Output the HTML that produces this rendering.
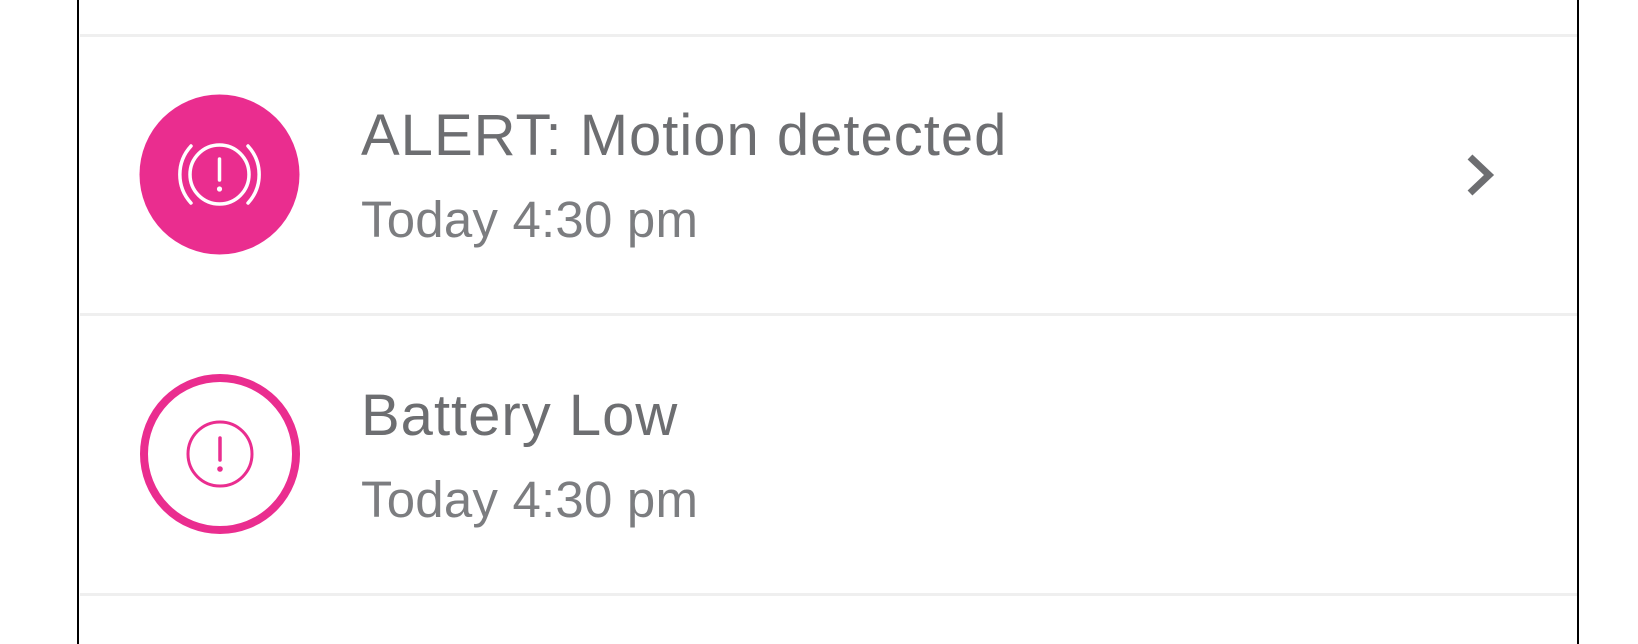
<!DOCTYPE html>
<html><head><meta charset="utf-8"><style>
html,body{margin:0;padding:0;background:#fff;width:1638px;height:644px;overflow:hidden;position:relative;font-family:"Liberation Sans",sans-serif;}
.bl{position:absolute;top:0;height:644px;width:2px;background:#000;}
.div{position:absolute;left:80px;width:1497px;height:3px;background:#efefef;}
.t{position:absolute;left:361px;color:#6d6e71;white-space:nowrap;line-height:1;}
.title{font-size:58px;letter-spacing:1px;}
.sub{font-size:51px;color:#7c7d80;letter-spacing:0.2px;}
</style></head><body>
<div class="bl" style="left:77px"></div>
<div class="bl" style="left:1577px"></div>
<div class="div" style="top:34px"></div>
<div class="div" style="top:313px"></div>
<div class="div" style="top:593px"></div>

<div class="t title" style="top:107px">ALERT: Motion detected</div>
<div class="t sub" style="top:194px">Today 4:30 pm</div>
<div class="t title" style="top:387px">Battery Low</div>
<div class="t sub" style="top:474px">Today 4:30 pm</div>

<svg width="1638" height="644" style="position:absolute;left:0;top:0">
  <circle cx="219.5" cy="174.5" r="80" fill="#ea2d8f"/>
  <circle cx="219.5" cy="174.5" r="29.5" fill="none" stroke="#fff" stroke-width="3.5"/>
  <path d="M191 146 A42 42 0 0 0 191 203" fill="none" stroke="#fff" stroke-width="3.5" stroke-linecap="round"/>
  <path d="M248 146 A42 42 0 0 1 248 203" fill="none" stroke="#fff" stroke-width="3.5" stroke-linecap="round"/>
  <line x1="219.5" y1="159" x2="219.5" y2="180" stroke="#fff" stroke-width="3.5" stroke-linecap="round"/>
  <circle cx="219.5" cy="189" r="2.6" fill="#fff"/>

  <circle cx="220" cy="454" r="76" fill="none" stroke="#ea2d8f" stroke-width="8"/>
  <circle cx="220" cy="454" r="32" fill="none" stroke="#ea2d8f" stroke-width="3"/>
  <line x1="220" y1="438" x2="220" y2="460" stroke="#ea2d8f" stroke-width="3.5" stroke-linecap="round"/>
  <circle cx="220" cy="469" r="2.8" fill="#ea2d8f"/>

  <path d="M1470 157 L1489 175 L1470 193" fill="none" stroke="#6d6e71" stroke-width="7"/>
</svg>
</body></html>
